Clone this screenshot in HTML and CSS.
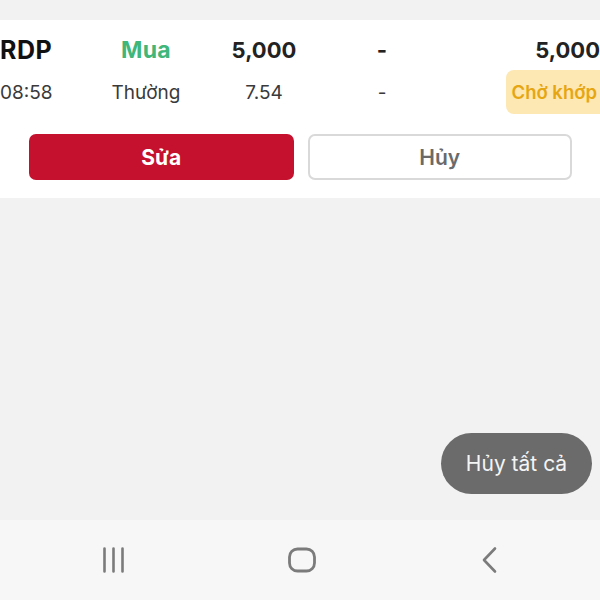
FILE: index.html
```html
<!DOCTYPE html>
<html lang="vi">
<head>
<meta charset="utf-8">
<link rel="stylesheet" href="styles.css">
</head>
<body>
<div class="screen">
  <div class="top-gap"></div>
  <section class="card">
    <div class="row row-main">
      <div class="c1 sym">RDP</div>
      <div class="cc buy">Mua</div>
      <div class="cc qty">5,000</div>
      <div class="cc dash">-</div>
      <div class="c5 qty">5,000</div>
    </div>
    <div class="row row-sub">
      <div class="c1 sub">08:58</div>
      <div class="cc sub">Thường</div>
      <div class="cc sub">7.54</div>
      <div class="cc sub">-</div>
      <div class="c5"><span class="badge">Chờ khớp</span></div>
    </div>
    <div class="actions">
      <button class="btn btn-edit">Sửa</button>
      <button class="btn btn-cancel">Hủy</button>
    </div>
  </section>
  <main class="content">
    <button class="fab">Hủy tất cả</button>
  </main>
  <nav class="navbar">
    <svg class="nav-icon" width="26" height="26" viewBox="0 0 26 26"><path d="M3.5 1.5v23M12.5 1.5v23M21.5 1.5v23" stroke="#7b7b7b" stroke-width="2.6" stroke-linecap="round" fill="none"/></svg>
    <svg class="nav-icon" width="30" height="26" viewBox="0 0 30 26"><rect x="2.5" y="2" width="25" height="22" rx="8" stroke="#7b7b7b" stroke-width="2.8" fill="none"/></svg>
    <svg class="nav-icon" width="20" height="28" viewBox="0 0 20 28"><path d="M15 2.5 L4 14 L15 25.5" stroke="#7b7b7b" stroke-width="2.6" stroke-linecap="round" stroke-linejoin="round" fill="none"/></svg>
  </nav>
</div>
</body>
</html>
```

FILE: styles.css
```css
* { box-sizing: border-box; }
html, body { margin: 0; padding: 0; }
body {
  width: 600px;
  height: 600px;
  overflow: hidden;
  background: #f2f2f2;
  font-family: Inter, "Noto Sans", sans-serif;
  color: #1a1a1a;
}
.screen {
  width: 600px;
  height: 600px;
  display: flex;
  flex-direction: column;
  overflow: hidden;
}
.top-gap { height: 20px; flex: none; }
.card {
  flex: none;
  width: 600px;
  background: #fff;
  padding: 10px 0 18px 0;
}
.row {
  display: grid;
  grid-template-columns: 87px 118px 118px 118px 1fr;
  align-items: center;
}
.row-main { height: 40px; }
.row-sub { height: 44px; }
.c1 { padding-left: 0; }
.cc { text-align: center; }
.c5 { text-align: right; display: flex; justify-content: flex-end; }
.sym { font-size: 25px; font-weight: 700; color: #111; letter-spacing: 0.5px; }
.buy { font-size: 23px; font-weight: 700; color: #3fb67a; letter-spacing: 0.3px; }
.qty { font-size: 22px; font-weight: 700; color: #222; }
.dash { font-size: 22px; font-weight: 700; color: #222; }
.sub { font-size: 19px; font-weight: 400; color: #3a3a3a; }
.badge {
  display: inline-flex;
  align-items: center;
  height: 44px;
  padding: 0 3px 0 6px;
  background: #fde7b2;
  color: #e6a612;
  border-radius: 8px 0 0 8px;
  font-size: 18.5px;
  font-weight: 600;
}
.actions {
  display: grid;
  grid-template-columns: 1fr 1fr;
  gap: 14px;
  width: 600px;
  padding: 0 28px 0 29px;
  margin-top: 20px;
}
.btn {
  height: 46px;
  border-radius: 7px;
  font-family: inherit;
  font-size: 21px;
  font-weight: 700;
  cursor: pointer;
}
.btn-edit {
  background: #c5102e;
  color: #fff;
  border: none;
}
.btn-cancel {
  background: #fff;
  color: #6a6a6a;
  border: 2px solid #d9d9d9;
  font-weight: 600;
}
.content {
  flex: 1;
  position: relative;
}
.fab {
  position: absolute;
  right: 8px;
  bottom: 26px;
  width: 151px;
  height: 61px;
  border-radius: 31px;
  border: none;
  background: #6b6b6b;
  color: #f4f4f4;
  font-family: inherit;
  font-size: 21px;
  font-weight: 400;
}
.navbar {
  flex: none;
  height: 80px;
  background: #f7f7f7;
  display: grid;
  grid-template-columns: repeat(3, 188px);
  align-items: center;
  justify-items: center;
  padding: 0 0 0 20px;
}
```
